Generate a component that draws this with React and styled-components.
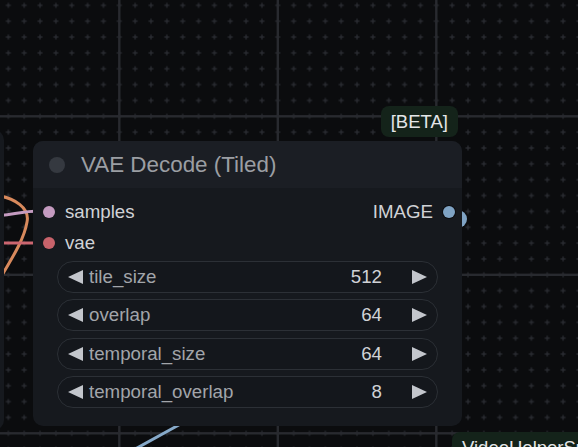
import React from 'react';
import styled, { createGlobalStyle } from 'styled-components';

const GlobalStyle = createGlobalStyle`
  body {
    margin: 0;
    background: #0b0c0e;
    font-family: "Liberation Sans", Arial, sans-serif;
  }
`;

const Canvas = styled.div`
  position: relative;
  width: 578px;
  height: 447px;
  overflow: hidden;
  background: #0b0c0e;
`;

const Layer = styled.svg`
  position: absolute;
  left: 0;
  top: 0;
  width: 578px;
  height: 447px;
`;

const Node = styled.div`
  position: absolute;
  left: ${p => p.$x}px;
  top: ${p => p.$y}px;
  width: ${p => p.$w}px;
  height: ${p => p.$h}px;
  display: flex;
  flex-direction: column;
  border-radius: 10px;
  background: #16191e;
  overflow: hidden;
`;

const NodeTitle = styled.div`
  display: flex;
  align-items: center;
  gap: 16px;
  height: 47px;
  flex-shrink: 0;
  padding-left: 16px;
  background: #1b1e24;
`;

const TitleDot = styled.span`
  width: 16px;
  height: 16px;
  border-radius: 50%;
  background: #353940;
`;

const TitleText = styled.span`
  font-size: 22.4px;
  color: #9b9ea3;
  white-space: nowrap;
`;

const NodeBody = styled.div`
  display: flex;
  flex-direction: column;
  padding: 8px 0 18px;
`;

const SlotRow = styled.div`
  display: flex;
  align-items: center;
  justify-content: space-between;
  height: 31px;
  padding: 0 7px 0 10px;
`;

const Slot = styled.div`
  display: flex;
  align-items: center;
  gap: 10px;
  font-size: 18.7px;
  color: #d0d2d6;
`;

const SlotDot = styled.span`
  width: 12px;
  height: 12px;
  border-radius: 50%;
  background: ${p => p.$color};
  box-shadow: ${p => (p.$ring ? '0 0 0 1px #0c0d10' : 'none')};
`;

const WidgetList = styled.div`
  display: flex;
  flex-direction: column;
  gap: 6.3px;
  margin-top: 3px;
  padding: 0 24px;
`;

const Widget = styled.div`
  display: flex;
  align-items: center;
  height: 32px;
  box-sizing: border-box;
  padding: 0 10px;
  border: 1px solid #2c3036;
  border-radius: 16px;
  background: #14171c;
  font-size: 18.7px;
`;

const WidgetLabel = styled.span`
  flex: 1;
  margin-left: 6px;
  color: #a2a5aa;
`;

const WidgetValue = styled.span`
  margin-right: 30px;
  color: #d0d2d6;
`;

const Badge = styled.div`
  position: absolute;
  left: ${p => p.$x}px;
  top: ${p => p.$y}px;
  height: 31px;
  display: flex;
  align-items: center;
  padding: 0 10px;
  border-radius: 8px;
  background: #14231a;
  color: #e4e6e8;
  font-size: 18.5px;
  white-space: nowrap;
`;

const Arrow = ({ dir }) => (
  <svg width="15" height="14" viewBox="0 0 15 14">
    <polygon points={dir === 'left' ? '15,0 15,14 0,7' : '0,0 0,14 15,7'} fill="#c3c6cc" />
  </svg>
);

const widgets = [
  { label: 'tile_size', value: 512 },
  { label: 'overlap', value: 64 },
  { label: 'temporal_size', value: 64 },
  { label: 'temporal_overlap', value: 8 },
];

const STEP = 15.85;

const Grid = () => {
  const xs = [-39.2, 119.3, 277.8, 436.3, 594.8];
  const ys = [-42.2, 116.3, 274.8, 433.3];
  return (
    <Layer>
      <defs>
        <pattern id="dots" patternUnits="userSpaceOnUse" x="0.425" y="-2.575" width={STEP} height={STEP}>
          <rect x={STEP / 2 - 2.5} y={STEP / 2 - 0.6} width="5" height="1.2" fill="#2b2e34" />
          <rect x={STEP / 2 - 0.6} y={STEP / 2 - 2.5} width="1.2" height="5" fill="#2b2e34" />
        </pattern>
      </defs>
      <rect width="578" height="447" fill="url(#dots)" />
      {xs.map(x => (
        <rect key={'x' + x} x={x - 1.2} y="0" width="2.4" height="447" fill="#282a2f" />
      ))}
      {ys.map(y => (
        <rect key={'y' + y} x="0" y={y - 1.2} width="578" height="2.4" fill="#282a2f" />
      ))}
    </Layer>
  );
};

const Links = () => (
  <Layer>
    <path d="M -5 195 C 15 198, 30 208, 27 222 C 24 240, 12 258, -2 282" stroke="#d8895c" strokeWidth="3" fill="none" />
    <path d="M -10 216 C 10 216, 20 211, 40 211" stroke="#c49bc0" strokeWidth="3" fill="none" />
    <path d="M -10 243 L 40 243" stroke="#cc6670" strokeWidth="3" fill="none" />
    <path d="M 195 416 L 128 453" stroke="#86a9c9" strokeWidth="3" fill="none" />
    <circle cx="458" cy="219" r="9" fill="#7fa3c4" />
  </Layer>
);

export default function App() {
  return (
    <Canvas>
      <GlobalStyle />
      <Grid />
      <Links />
      <Node $x={-300} $y={130} $w={304} $h={300} />
      <Badge $x={380.7} $y={106}>[BETA]</Badge>
      <Node $x={33} $y={141} $w={429} $h={285}>
        <NodeTitle>
          <TitleDot />
          <TitleText>VAE Decode (Tiled)</TitleText>
        </NodeTitle>
        <NodeBody>
          <SlotRow>
            <Slot>
              <SlotDot $color="#c49bc0" />
              samples
            </Slot>
            <Slot>
              IMAGE
              <SlotDot $color="#7fa3c4" $ring />
            </Slot>
          </SlotRow>
          <SlotRow>
            <Slot>
              <SlotDot $color="#c8636b" />
              vae
            </Slot>
          </SlotRow>
          <WidgetList>
            {widgets.map(w => (
              <Widget key={w.label}>
                <Arrow dir="left" />
                <WidgetLabel>{w.label}</WidgetLabel>
                <WidgetValue>{w.value}</WidgetValue>
                <Arrow dir="right" />
              </Widget>
            ))}
          </WidgetList>
        </NodeBody>
      </Node>
      <Badge $x={452} $y={432}>VideoHelperSuite 🎥🅥🅗🅢</Badge>
    </Canvas>
  );
}
